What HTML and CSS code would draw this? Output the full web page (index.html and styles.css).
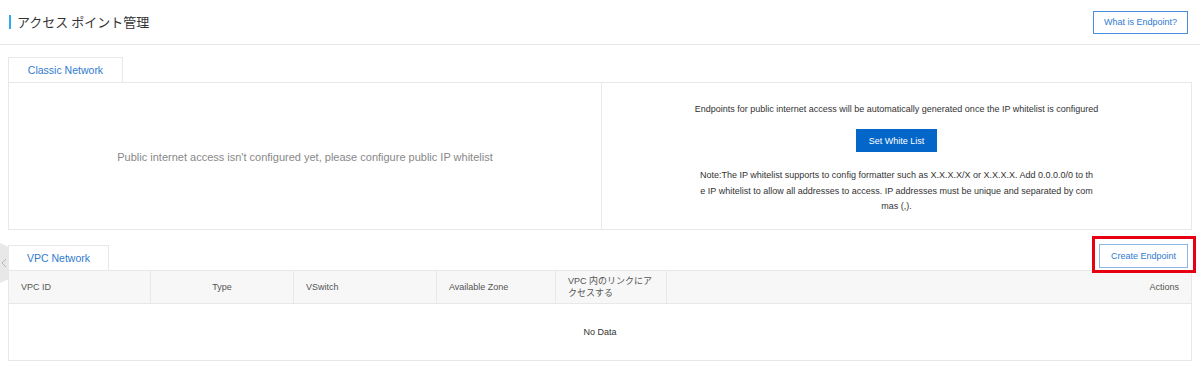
FILE: index.html
```html
<!DOCTYPE html>
<html lang="ja">
<head>
<meta charset="UTF-8">
<meta name="viewport" content="width=device-width, initial-scale=1.0">
<title>アクセス ポイント管理</title>
<link rel="stylesheet" href="styles.css">
</head>
<body>

<header class="page-head">
  <h1 class="page-title">アクセス ポイント管理</h1>
  <button type="button" class="btn btn-outline">What is Endpoint?</button>
</header>

<div class="side-handle">
  <svg width="6" height="10" viewBox="0 0 6 10"><path d="M5 1 L1 5 L5 9" fill="none" stroke="#b5b5b5" stroke-width="1"/></svg>
</div>

<main class="content">
  <section class="block">
    <div class="tabs">
      <div class="tab tab-classic">Classic Network</div>
    </div>
    <div class="panel">
      <div class="pane pane-empty">
        Public internet access isn't configured yet, please configure public IP whitelist
      </div>
      <div class="pane pane-whitelist">
        <p class="lead">Endpoints for public internet access will be automatically generated once the IP whitelist is configured</p>
        <button type="button" class="btn btn-primary">Set White List</button>
        <p class="note">Note:The IP whitelist supports to config formatter such as X.X.X.X/X or X.X.X.X. Add 0.0.0.0/0 to the IP whitelist to allow all addresses to access. IP addresses must be unique and separated by commas (,).</p>
      </div>
    </div>
  </section>

  <section class="block block-vpc">
    <div class="tabs">
      <div class="tab tab-vpc">VPC Network</div>
      <div class="highlight">
        <button type="button" class="btn btn-outline btn-create">Create Endpoint</button>
      </div>
    </div>
    <table class="grid">
      <thead>
        <tr>
          <th class="col-id">VPC ID</th>
          <th class="col-type">Type</th>
          <th class="col-vsw">VSwitch</th>
          <th class="col-zone">Available Zone</th>
          <th class="col-link">VPC 内のリンクにアクセスする</th>
          <th class="col-actions">Actions</th>
        </tr>
      </thead>
      <tbody>
        <tr>
          <td colspan="6" class="empty">No Data</td>
        </tr>
      </tbody>
    </table>
  </section>
</main>

</body>
</html>
```

FILE: styles.css
```css
body {
  margin: 0;
  font-family: "Liberation Sans", Arial, "Noto Sans CJK JP", sans-serif;
  font-size: 9px;
  color: #333;
  background-color: #fff;
}

.page-head {
  height: 44px;
  display: flex;
  align-items: center;
  justify-content: space-between;
  padding: 0 12px 0 9px;
  border-bottom: 1px solid #e6e6e6;
}

.page-title {
  margin: 0;
  padding-left: 6px;
  border-left: 2px solid #2eaaf0;
  font-family: "Noto Sans CJK JP", sans-serif;
  font-size: 13px;
  font-weight: normal;
  line-height: 14px;
  color: #333;
}

.btn {
  font-family: inherit;
  font-size: 9px;
  cursor: pointer;
  border-radius: 0;
}

.btn-outline {
  height: 23px;
  padding: 0 10px;
  background-color: #fff;
  border: 1px solid #4a8fdd;
  color: #2f7bd0;
}

.btn-primary {
  height: 23px;
  padding: 0 12px;
  background-color: #0466c8;
  border: 1px solid #0466c8;
  color: #fff;
}

.content {
  padding: 12px 8px 0 8px;
}

.side-handle {
  position: absolute;
  left: 0;
  top: 243px;
  width: 9px;
  height: 40px;
  background-color: #e8e8e8;
  clip-path: polygon(0 0, 100% 4px, 100% calc(100% - 4px), 0 100%);
  display: flex;
  align-items: center;
  justify-content: flex-start;
  padding-left: 1px;
  box-sizing: border-box;
}

.tabs {
  display: flex;
  align-items: flex-end;
  justify-content: space-between;
}

.tab {
  height: 25px;
  line-height: 25px;
  border: 1px solid #e8e8e8;
  border-bottom: none;
  color: #2f7bd0;
  font-size: 10.5px;
  text-align: center;
  box-sizing: border-box;
}

.tab-classic {
  width: 115px;
}

.tab-vpc {
  width: 101px;
  height: 25px;
}

.panel {
  display: flex;
  height: 148px;
  border: 1px solid #e8e8e8;
  box-sizing: border-box;
}

.pane {
  flex: 1;
  display: flex;
  flex-direction: column;
  align-items: center;
  justify-content: center;
}

.pane-empty {
  flex: 0 0 592px;
  border-right: 1px solid #e8e8e8;
  color: #888;
  font-size: 11px;
  padding-top: 2px;
}

.pane-whitelist {
  justify-content: flex-start;
  padding-top: 19px;
}

.lead {
  margin: 0 0 13px 0;
  line-height: 14px;
}

.note {
  margin: 16px 0 0 0;
  width: 394px;
  line-height: 15.5px;
  text-align: center;
  word-break: break-all;
}

.block-vpc {
  margin-top: 15px;
}

.block-vpc .tabs {
  height: 25px;
}

.highlight {
  position: relative;
  z-index: 1;
  align-self: flex-end;
  margin-bottom: -3px;
  margin-right: -4px;
  padding: 5px 5px 2px 4px;
  border: 3px solid #e60012;
}

.btn-create {
  display: block;
  width: 89px;
  height: 24px;
  padding: 0;
  border-color: #8cb6e6;
}

.grid {
  width: 100%;
  border-collapse: collapse;
  border: 1px solid #e8e8e8;
  table-layout: fixed;
}

.grid th {
  height: 32px;
  padding: 0 12px;
  background-color: #f7f7f7;
  border-right: 1px solid #e8e8e8;
  border-bottom: 1px solid #e8e8e8;
  font-weight: normal;
  color: #555;
  text-align: left;
  line-height: 12px;
}

.grid th.col-type {
  text-align: center;
}

.grid th.col-actions {
  text-align: right;
  border-right: none;
}

.col-id { width: 117px; }
.col-type { width: 118px; }
.col-vsw { width: 118px; }
.col-zone { width: 94px; }
.col-link { width: 86px; }

.grid td.empty {
  height: 54px;
  text-align: center;
  color: #333;
  padding-top: 1px;
}
```
